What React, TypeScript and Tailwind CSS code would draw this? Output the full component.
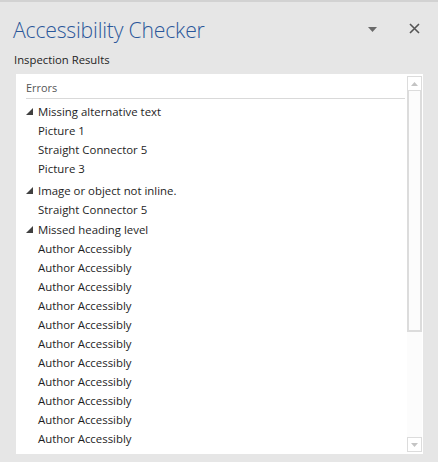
import React from "react";

const Tri = () => (
  <svg width="7" height="7" viewBox="0 0 7 7" className="shrink-0">
    <polygon points="7,0 7,7 0,7" fill="#404040" />
  </svg>
);

const groups: { title: string; items: string[]; mt: string }[] = [
  { title: "Missing alternative text", items: ["Picture 1", "Straight Connector 5", "Picture 3"], mt: "" },
  { title: "Image or object not inline.", items: ["Straight Connector 5"], mt: "mt-[3px]" },
  { title: "Missed heading level", items: Array(11).fill("Author Accessibly"), mt: "mt-[1px]" },
];

export default function App() {
  return (
    <div
      className="w-[438px] h-[462px] bg-[#e6e6e6] border-t-2 border-[#d2d2d2] flex flex-col overflow-hidden text-[#1e1e1e]"
      style={{ fontFamily: '"Open Sans", "Noto Sans", sans-serif' }}
    >
      <div className="flex items-center h-[52px] pl-[13px] pr-[18px]">
        <div className="text-[21.2px] font-light text-[#2b579a] tracking-[-0.2px] leading-none mt-[4px]">Accessibility Checker</div>
        <div className="flex-1" />
        <svg width="9" height="5" viewBox="0 0 9 5" className="mt-[3px]">
          <polygon points="0,0 9,0 4.5,5" fill="#6a6a6a" />
        </svg>
        <svg width="11" height="11" viewBox="0 0 11 11" className="ml-[32px] mt-[1px]">
          <path d="M1 1 L10 10 M10 1 L1 10" stroke="#555" strokeWidth="1.6" />
        </svg>
      </div>
      <div className="pl-[14px] text-[11.3px] leading-none h-[20px]">Inspection Results</div>
      <div className="ml-[16px] w-[407px] h-[380px] bg-white flex">
        <div className="flex-1 pl-[10px] pr-[2px] pt-[6px] overflow-hidden">
          <div className="text-[10.9px] text-[#555] h-[19px] border-b border-[#d9d9d9] leading-[16px]">Errors</div>
          <div className="pt-[3px]">
            {groups.map((g, gi) => (
              <div key={gi} className={g.mt}>
                <div className="flex items-center h-[19px] text-[11.4px]">
                  <div className="w-[12px] flex"><Tri /></div>
                  <span>{g.title}</span>
                </div>
                {g.items.map((it, i) => (
                  <div key={i} className="h-[19px] flex items-center pl-[12px] text-[11.4px]">
                    {it}
                  </div>
                ))}
              </div>
            ))}
          </div>
        </div>
        <div className="w-[15px] mr-[1px] mt-[2px] mb-[2px] flex flex-col bg-[#fcfcfc]">
          <div className="h-[15px] border border-[#dcdcdc] flex items-center justify-center bg-white">
            <svg width="7" height="4" viewBox="0 0 7 4"><polygon points="3.5,0 7,4 0,4" fill="#c4c4c4" /></svg>
          </div>
          <div className="h-[241px] border-2 border-t-0 border-[#dcdcdc] bg-[#fcfcfc]" />
          <div className="flex-1" />
          <div className="h-[15px] border border-[#dcdcdc] flex items-center justify-center bg-white">
            <svg width="7" height="4" viewBox="0 0 7 4"><polygon points="0,0 7,0 3.5,4" fill="#c4c4c4" /></svg>
          </div>
        </div>
      </div>
    </div>
  );
}
